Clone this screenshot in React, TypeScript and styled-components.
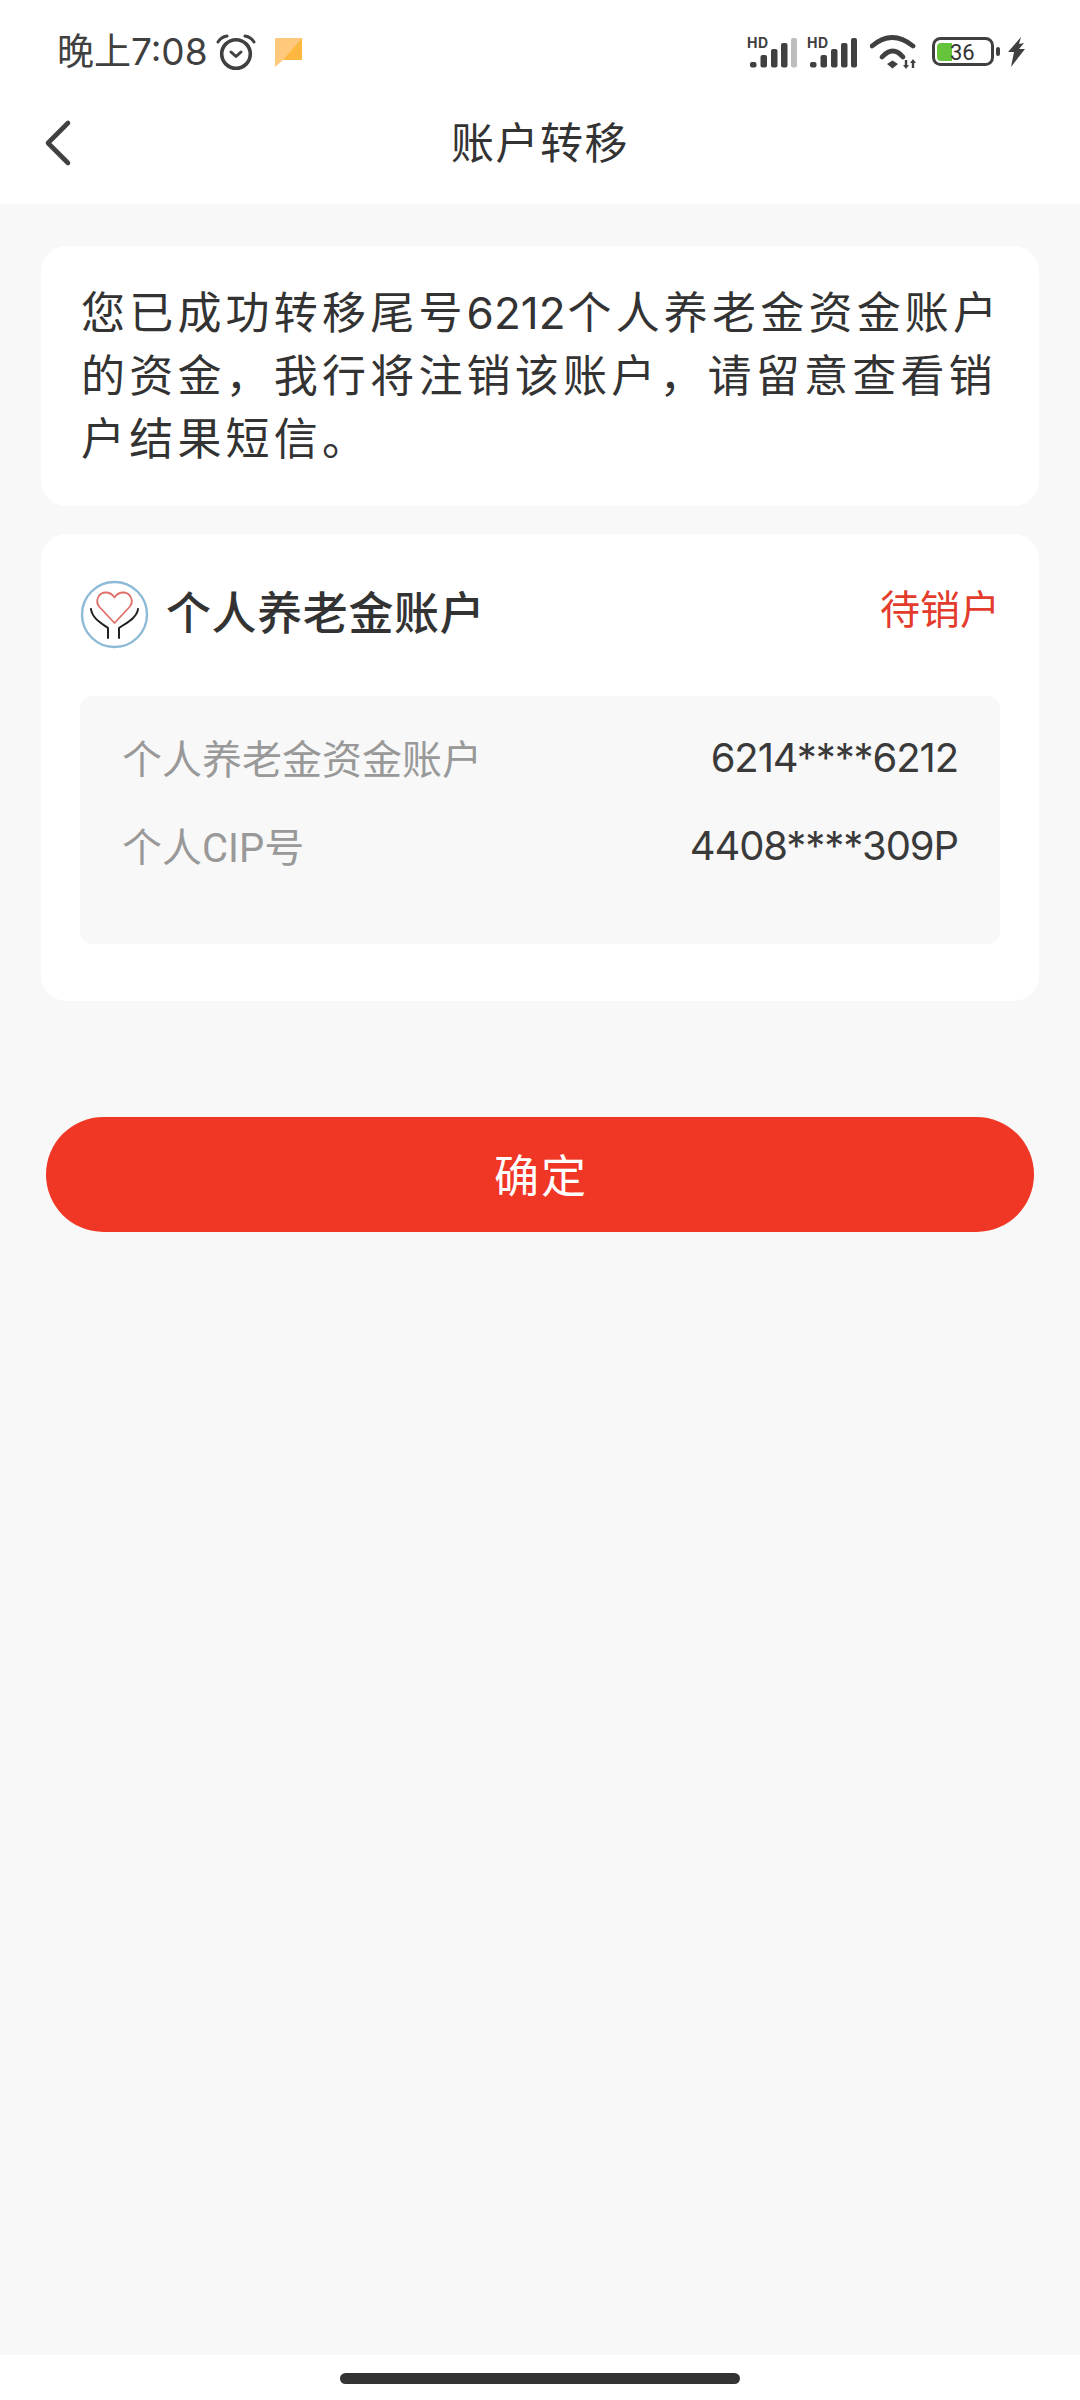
import React from 'react';
import styled, { createGlobalStyle } from 'styled-components';

const GlobalStyle = createGlobalStyle`
  html, body {
    margin: 0;
    padding: 0;
    background: #f8f8f8;
  }
  * { box-sizing: border-box; }
`;

const FONT = `Roboto, "Noto Sans CJK SC", sans-serif`;
const NUMBER_FONT = `Inter, "Noto Sans CJK SC", sans-serif`;

const Page = styled.div`
  width: 1080px;
  height: 2400px;
  display: flex;
  flex-direction: column;
  background: #f8f8f8;
  font-family: ${FONT};
  color: #333;
`;

const StatusBar = styled.div`
  height: 104px;
  padding: 0 55px 0 57px;
  background: #fff;
  display: flex;
  align-items: center;
  justify-content: space-between;
`;

const StatusLeft = styled.div`
  display: flex;
  align-items: center;
`;

const StatusRight = styled.div`
  display: flex;
  align-items: center;
  gap: 10px;
`;

const Clock = styled.span`
  font-family: ${NUMBER_FONT};
  font-size: 37px;
  line-height: 44px;
  color: #404040;
  margin-right: 8px;
`;

const NavBar = styled.div`
  position: relative;
  height: 100px;
  background: #fff;
  display: flex;
  align-items: center;
  justify-content: center;
`;

const BackButton = styled.div`
  position: absolute;
  left: 42px;
  top: 14px;
  width: 32px;
  height: 52px;
`;

const NavTitle = styled.div`
  font-size: 43px;
  letter-spacing: 1.5px;
  color: #333;
  margin-top: -28px;
`;

const Body = styled.div`
  flex: 1;
  padding: 42px 41px 0;
  display: flex;
  flex-direction: column;
`;

const Card = styled.div`
  background: #fff;
  border-radius: 26px;
`;

const NoticeCard = styled(Card)`
  height: 260px;
  padding: 36px 36px 0 40px;
  font-size: 44px;
  line-height: 63px;
  letter-spacing: 4.2px;
  color: #333;
`;

const NoticeNumber = styled.span`
  font-family: ${NUMBER_FONT};
  letter-spacing: 0;
  margin-right: 2px;
`;

const AccountCard = styled(Card)`
  height: 467px;
  margin-top: 28px;
  padding: 40px 39px 0;
`;

const AccountHead = styled.div`
  display: flex;
  align-items: center;
  height: 72px;
`;

const LogoMark = styled.svg`
  flex: none;
  margin-top: 9px;
`;

const AccountName = styled.div`
  flex: 1;
  margin-left: 16px;
  font-size: 45px;
  font-weight: 500;
  letter-spacing: 0.6px;
  color: #333;
`;

const AccountStatus = styled.div`
  font-size: 40px;
  color: #e33b2c;
  margin-top: -6px;
`;

const DetailBox = styled.div`
  height: 248px;
  margin-top: 50px;
  padding: 31px 42px 0 42px;
  background: #f8f8f8;
  border-radius: 12px;
`;

const DetailRow = styled.div`
  display: flex;
  justify-content: space-between;
  align-items: center;
  height: 60px;
  margin-bottom: 28px;
`;

const DetailLabel = styled.span`
  font-size: 40px;
  color: #999;
`;

const DetailValue = styled.span`
  font-family: ${NUMBER_FONT};
  font-size: 40px;
  letter-spacing: -1.1px;
  color: #3a3a3a;
`;

const ConfirmButton = styled.button`
  align-self: center;
  width: 988px;
  height: 115px;
  margin-top: 116px;
  padding: 0 0 2px 2px;
  border: none;
  border-radius: 58px;
  background: #f03624;
  color: #fff;
  font-family: ${FONT};
  font-size: 45px;
  letter-spacing: 2px;
`;

const HomeArea = styled.div`
  height: 45px;
  background: #fff;
  display: flex;
  justify-content: center;
  padding-top: 18px;
`;

const HomeBar = styled.div`
  width: 400px;
  height: 11px;
  border-radius: 6px;
  background: #333;
`;

const AlarmIcon = () => (
  <svg width="40" height="37" viewBox="0 0 40 37" fill="none" stroke="#404040" strokeLinecap="round">
    <circle cx="20" cy="20" r="14.3" strokeWidth="3.6" />
    <path d="M15 18l5 4.500 5-4.500" strokeWidth="3" strokeLinejoin="round" />
    <path d="M2 8Q5 3 11 2M38 8Q35 3 29 2" strokeWidth="3" />
  </svg>
);

const MessageIcon = () => (
  <svg width="27" height="29" viewBox="0 0 27 29" style={{ marginLeft: 19 }}>
    <path d="M1 0h25a1 1 0 0 1 1 1v20a1 1 0 0 1-1 1H8l-8 7V1a1 1 0 0 1 1-1z" fill="#ffc87a" />
    <path d="M27 0v21a1 1 0 0 1-1 1H8z" fill="#ffb83f" />
  </svg>
);

const SignalIcon = ({ full }: { full?: boolean }) => (
  <svg width="50" height="31" viewBox="0 0 50 31" overflow="visible">
    <text x="0" y="11" fontFamily="Inter, sans-serif" fontWeight="700" fontSize="14" letterSpacing="0.5" fill="#404040">HD</text>
    <rect x="3" y="25" width="6.500" height="5.500" rx="2" fill="#404040" />
    <rect x="13.500" y="18" width="6.500" height="12.500" rx="2" fill="#404040" />
    <rect x="24" y="12" width="6.500" height="18.500" rx="2" fill="#404040" />
    <rect x="34" y="6" width="6.500" height="24.500" rx="2" fill="#404040" />
    <rect x="44" y="1" width="6" height="29.500" rx="2" fill={full ? '#404040' : '#bdbdbd'} />
  </svg>
);

const WifiIcon = () => (
  <svg width="48" height="35" viewBox="0 0 48 35" fill="none" stroke="#404040" strokeWidth="4.800" strokeLinecap="round" style={{ marginLeft: 3 }}>
    <path d="M2 11Q22-6 43 11" />
    <path d="M12 22Q23 10 33 22" />
    <path d="M17 29l5.500-3.500 5.500 3.500-5.500 4.500z" fill="#404040" stroke="none" />
    <path d="M36 25v6M43 27v6" strokeWidth="2.400" strokeLinecap="butt" />
    <path d="M33 30h6l-3 4zM40 28h6l-3-4z" fill="#404040" stroke="none" />
  </svg>
);

const BatteryIcon = () => (
  <svg width="68" height="30" viewBox="0 0 68 30" overflow="visible" style={{ marginLeft: 4 }}>
    <rect x="1.500" y="1.500" width="59" height="26" rx="7" fill="none" stroke="#404040" strokeWidth="3" />
    <path d="M9 6h11v18H9a4 4 0 0 1-4-4V10a4 4 0 0 1 4-4z" fill="#66c43a" />
    <rect x="64" y="10" width="4" height="9" rx="2" fill="#404040" />
    <text x="18" y="23" fontFamily="Roboto, sans-serif" fontSize="22" fill="#333">36</text>
  </svg>
);

const BoltIcon = () => (
  <svg width="17" height="30" viewBox="0 0 17 30" style={{ marginLeft: -2 }}>
    <path d="M13 0L0 15l6 0-3 15L17 12l-6 0 5-6-5 1z" fill="#404040" />
  </svg>
);

const PensionLogo = () => (
  <LogoMark width="70" height="70" viewBox="0 0 70 70" fill="none">
    <circle cx="34.500" cy="34.500" r="32.500" stroke="#8dbad6" strokeWidth="2.400" />
    <path d="M34.500 43L19.500 27c-5-6-1-14.500 6.500-14.500 4 0 6.500 2 8.500 5 2-3 4.500-5 8.500-5 7.500 0 11.500 8.500 6.500 14.500z" stroke="#e0706a" strokeWidth="1.800" strokeLinejoin="round" />
    <path d="M11 29c1 9 10 14 17 19v10M58 29c-1 9-12 14-19 19v10" stroke="#222" strokeWidth="2" strokeLinecap="round" />
  </LogoMark>
);

export default function App() {
  return (
    <Page>
      <GlobalStyle />
      <StatusBar>
        <StatusLeft>
          <Clock>晚上7:08</Clock>
          <AlarmIcon />
          <MessageIcon />
        </StatusLeft>
        <StatusRight>
          <SignalIcon />
          <SignalIcon full />
          <WifiIcon />
          <BatteryIcon />
          <BoltIcon />
        </StatusRight>
      </StatusBar>
      <NavBar>
        <BackButton>
          <svg width="32" height="52" viewBox="0 0 32 52" fill="none" stroke="#404040" strokeWidth="4.600" strokeLinecap="round" strokeLinejoin="round">
            <path d="M26 5L6 25l20 20" />
          </svg>
        </BackButton>
        <NavTitle>账户转移</NavTitle>
      </NavBar>
      <Body>
        <NoticeCard>
          您已成功转移尾号<NoticeNumber>6212</NoticeNumber>个人养老金资金账户
          <br />
          的资金，我行将注销该账户，请留意查看销户结果短信。
        </NoticeCard>
        <AccountCard>
          <AccountHead>
            <PensionLogo />
            <AccountName>个人养老金账户</AccountName>
            <AccountStatus>待销户</AccountStatus>
          </AccountHead>
          <DetailBox>
            <DetailRow>
              <DetailLabel>个人养老金资金账户</DetailLabel>
              <DetailValue>6214****6212</DetailValue>
            </DetailRow>
            <DetailRow>
              <DetailLabel>个人CIP号</DetailLabel>
              <DetailValue>4408****309P</DetailValue>
            </DetailRow>
          </DetailBox>
        </AccountCard>
        <ConfirmButton>确定</ConfirmButton>
      </Body>
      <HomeArea>
        <HomeBar />
      </HomeArea>
    </Page>
  );
}
